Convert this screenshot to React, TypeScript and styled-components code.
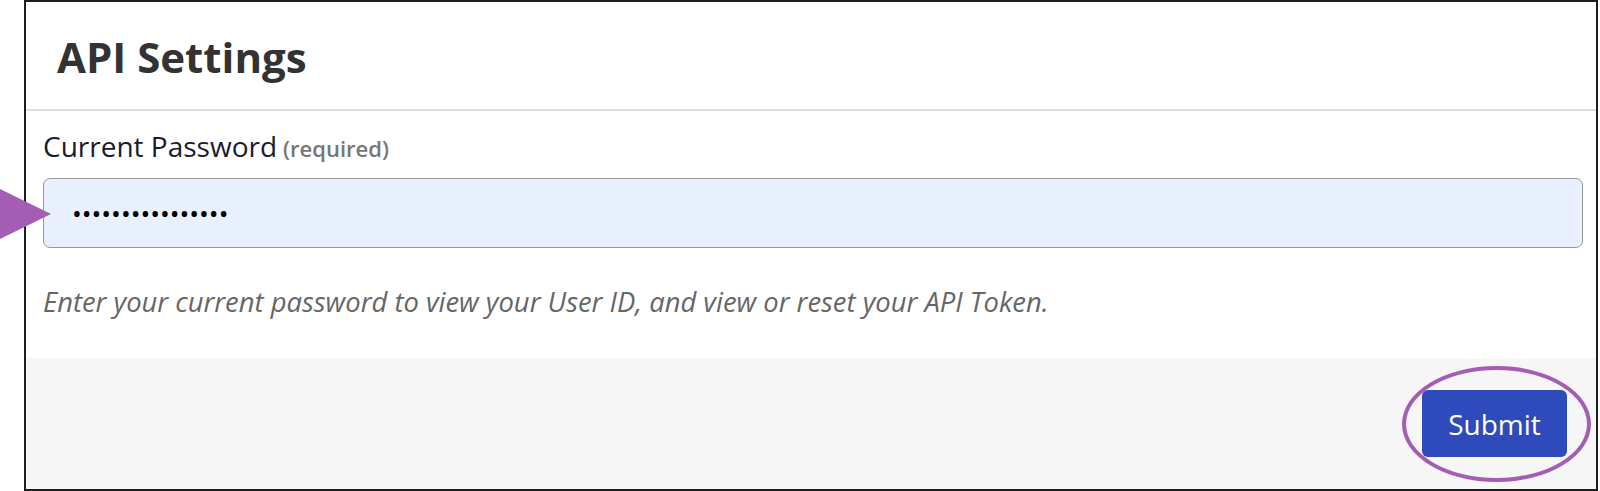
import React from "react";
import styled, { createGlobalStyle } from "styled-components";

const GlobalStyle = createGlobalStyle`
  *, *::before, *::after {
    box-sizing: border-box;
  }

  body {
    margin: 0;
    background: #fff;
    font-family: "Open Sans", "Noto Sans", sans-serif;
  }
`;

const Stage = styled.div`
  position: relative;
  width: 1600px;
  height: 491px;
  overflow: hidden;
  background: #fff;
`;

const Panel = styled.section`
  display: flex;
  flex-direction: column;
  margin-left: 24px;
  width: 1574px;
  height: 491px;
  border: 2px solid #1e1e1e;
  background: #fff;
`;

const Header = styled.header`
  height: 109px;
  padding: 26px 31px 0;
  border-bottom: 2px solid #dedede;
`;

const Title = styled.h1`
  margin: 0;
  font-size: 42px;
  font-weight: 700;
  color: #333;
`;

const Body = styled.div`
  padding: 16px 13px 38px 17px;
`;

const LabelRow = styled.label`
  display: flex;
  align-items: baseline;
  gap: 6px;
`;

const LabelText = styled.span`
  font-size: 28px;
  color: #1a1b30;
`;

const Required = styled.span`
  font-size: 22px;
  font-weight: 600;
  color: #777;
`;

const PasswordInput = styled.input`
  display: block;
  width: 100%;
  height: 70px;
  margin-top: 13px;
  padding: 0 28px;
  border: 1px solid #999;
  border-radius: 7px;
  background: #e8f0fe;
  font-family: "Open Sans", sans-serif;
  font-size: 26px;
  color: #000;
  outline: none;
`;

const Help = styled.p`
  margin: 35px 0 0;
  font-size: 27.4px;
  font-style: italic;
  color: #666;
`;

const Footer = styled.footer`
  flex: 1;
  display: flex;
  align-items: center;
  justify-content: flex-end;
  padding-right: 29px;
  background: #f6f6f6;
`;

const ButtonWrap = styled.div`
  position: relative;
`;

const SubmitButton = styled.button`
  width: 145px;
  height: 67px;
  border: none;
  border-radius: 6px;
  background: #2f4abb;
  color: #fff;
  font-family: "Open Sans", sans-serif;
  font-size: 28px;
  cursor: pointer;
`;

const Highlight = styled.span`
  position: absolute;
  left: -20px;
  right: -24px;
  top: -24px;
  bottom: -25px;
  border: 4px solid #a35db5;
  border-radius: 50%;
  pointer-events: none;
`;

const Pointer = styled.svg`
  position: absolute;
  left: 0;
  top: 189px;
`;

export default function App() {
  return (
    <>
      <GlobalStyle />
      <Stage>
        <Panel>
          <Header>
            <Title>API Settings</Title>
          </Header>
          <Body>
            <LabelRow htmlFor="current-password">
              <LabelText>Current Password</LabelText>
              <Required>(required)</Required>
            </LabelRow>
            <PasswordInput
              id="current-password"
              type="password"
              defaultValue="abcdefghijklmnop"
              readOnly
            />
            <Help>
              Enter your current password to view your User ID, and view or
              reset your API Token.
            </Help>
          </Body>
          <Footer>
            <ButtonWrap>
              <SubmitButton type="button">Submit</SubmitButton>
              <Highlight />
            </ButtonWrap>
          </Footer>
        </Panel>
        <Pointer width="52" height="50" viewBox="0 0 52 50">
          <polygon points="0,0 51,25 0,50" fill="#a35db5" />
        </Pointer>
      </Stage>
    </>
  );
}
